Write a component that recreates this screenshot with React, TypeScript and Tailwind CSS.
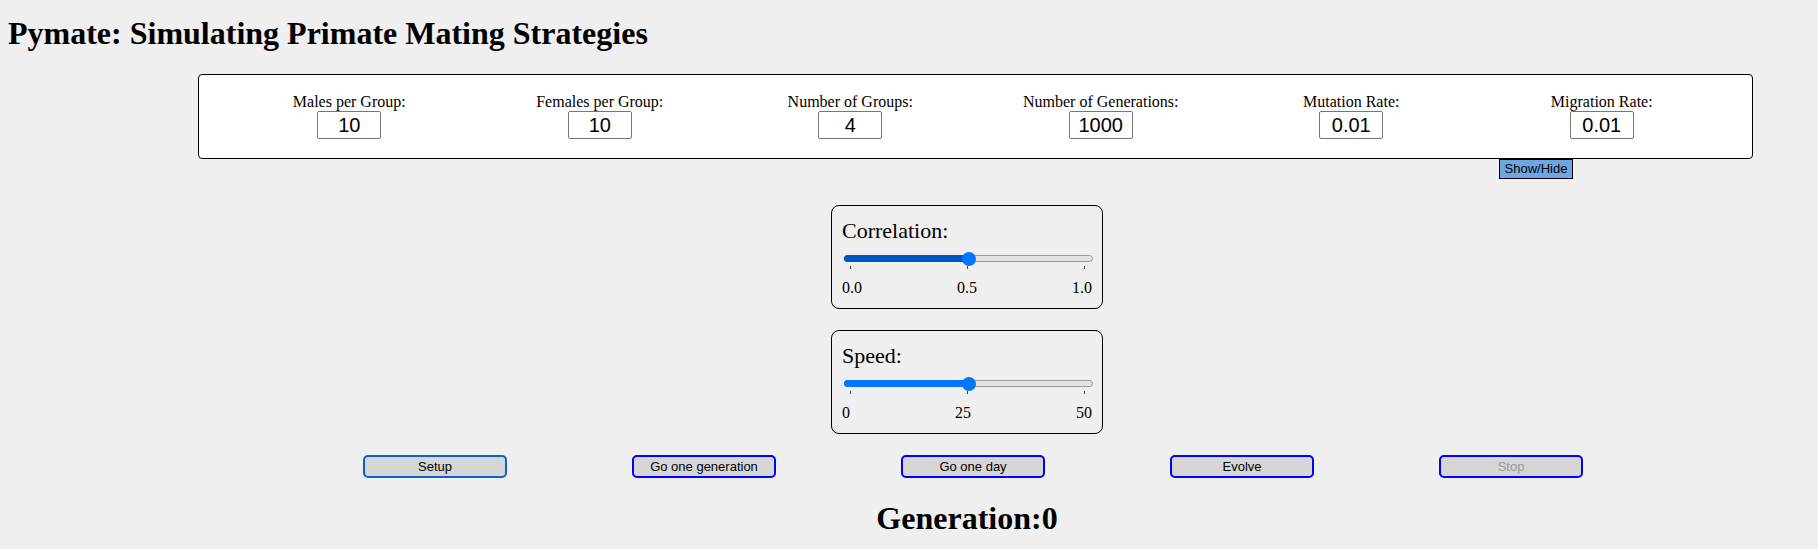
import React from "react";

const serif = "font-['Liberation_Serif','Times_New_Roman',serif]";
const sans = "font-['Liberation_Sans',Arial,sans-serif]";

const params = [
  { label: "Males per Group:", value: "10" },
  { label: "Females per Group:", value: "10" },
  { label: "Number of Groups:", value: "4" },
  { label: "Number of Generations:", value: "1000" },
  { label: "Mutation Rate:", value: "0.01" },
  { label: "Migration Rate:", value: "0.01" },
];

const buttons = [
  { text: "Setup", border: "border-[#0b5fd0]", color: "text-black" },
  { text: "Go one generation", border: "border-[#0000ff]", color: "text-black" },
  { text: "Go one day", border: "border-[#0000ff]", color: "text-black" },
  { text: "Evolve", border: "border-[#0000ff]", color: "text-black" },
  { text: "Stop", border: "border-[#0000ff]", color: "text-[#9a9a9a]" },
];

function Slider({ title, ticks, fill }: { title: string; ticks: string[]; fill: string }) {
  return (
    <div className="w-[272px] border border-black rounded-[8px] pl-[10px] pr-[10px] pt-[12px] pb-[11px]">
      <p className={`${serif} text-[22px] leading-[25px] text-black`}>{title}</p>
      <div className="relative h-[16px] mt-[8px] ml-[2px] -mr-[1px]">
        <div className="absolute left-0 right-0 top-[4px] h-[7px] rounded-full bg-[#e3e3e3] border border-[#9a9a9a]" />
        <div className={`absolute left-0 top-[4px] h-[7px] w-1/2 rounded-l-full ${fill}`} />
        <div className="absolute left-1/2 top-[1px] -ml-[7px] w-[14px] h-[14px] rounded-full bg-[#0075ff]" />
      </div>
      <div className="flex justify-between pl-[8px] pr-[7px] h-[3px] -mt-[1px]">
        <span className="w-px h-[3px] bg-[#444]" />
        <span className="w-px h-[3px] bg-[#444]" />
        <span className="w-px h-[3px] bg-[#444]" />
      </div>
      <div className={`${serif} flex justify-between mt-[10px] text-[16px] leading-[18px] text-black`}>
        {ticks.map((t) => (
          <span key={t}>{t}</span>
        ))}
      </div>
    </div>
  );
}

export default function App() {
  return (
    <div className="w-full min-h-[549px] bg-[#efefef] overflow-hidden">
      <h1 className={`${serif} text-[32px] leading-[37px] font-bold text-black pl-[8px] pt-[15px]`}>
        Pymate: Simulating Primate Mating Strategies
      </h1>

      <div className="ml-[198px] mt-[22px] w-[1555px] h-[85px] bg-white border border-black rounded-[4px] px-[25px] pt-[18px] pb-[17px] grid grid-cols-6">
        {params.map((p) => (
          <div key={p.label} className="flex flex-col items-center">
            <span className={`${serif} text-[16px] leading-[18px] text-black`}>{p.label}</span>
            <input
              readOnly
              value={p.value}
              className={`${sans} w-[64px] h-[28px] bg-white border border-[#767676] rounded-[2px] text-center text-[20px] text-black outline-none`}
            />
          </div>
        ))}
      </div>

      <button
        className={`${sans} block ml-[1499px] w-[74px] h-[20px] bg-[#6ea6e2] border border-black text-[13px] leading-[18px] text-black`}
      >
        Show/Hide
      </button>

      <div className="pl-[116px] mt-[26px] flex flex-col items-center gap-[21px]">
        <Slider title="Correlation:" ticks={["0.0", "0.5", "1.0"]} fill="bg-[#0054c4]" />
        <Slider title="Speed:" ticks={["0", "25", "50"]} fill="bg-[#0075ff]" />
      </div>

      <div className="pl-[128px] mt-[21px] flex justify-center gap-[125px]">
        {buttons.map((b) => (
          <button
            key={b.text}
            className={`${sans} ${b.border} ${b.color} w-[144px] h-[23px] border-2 rounded-[5px] bg-[#d6d6d6] text-[13px] leading-[17px]`}
          >
            {b.text}
          </button>
        ))}
      </div>

      <h1 className={`${serif} pl-[116px] mt-[22px] text-center text-[32px] leading-[37px] font-bold text-black`}>
        Generation:0
      </h1>
    </div>
  );
}
